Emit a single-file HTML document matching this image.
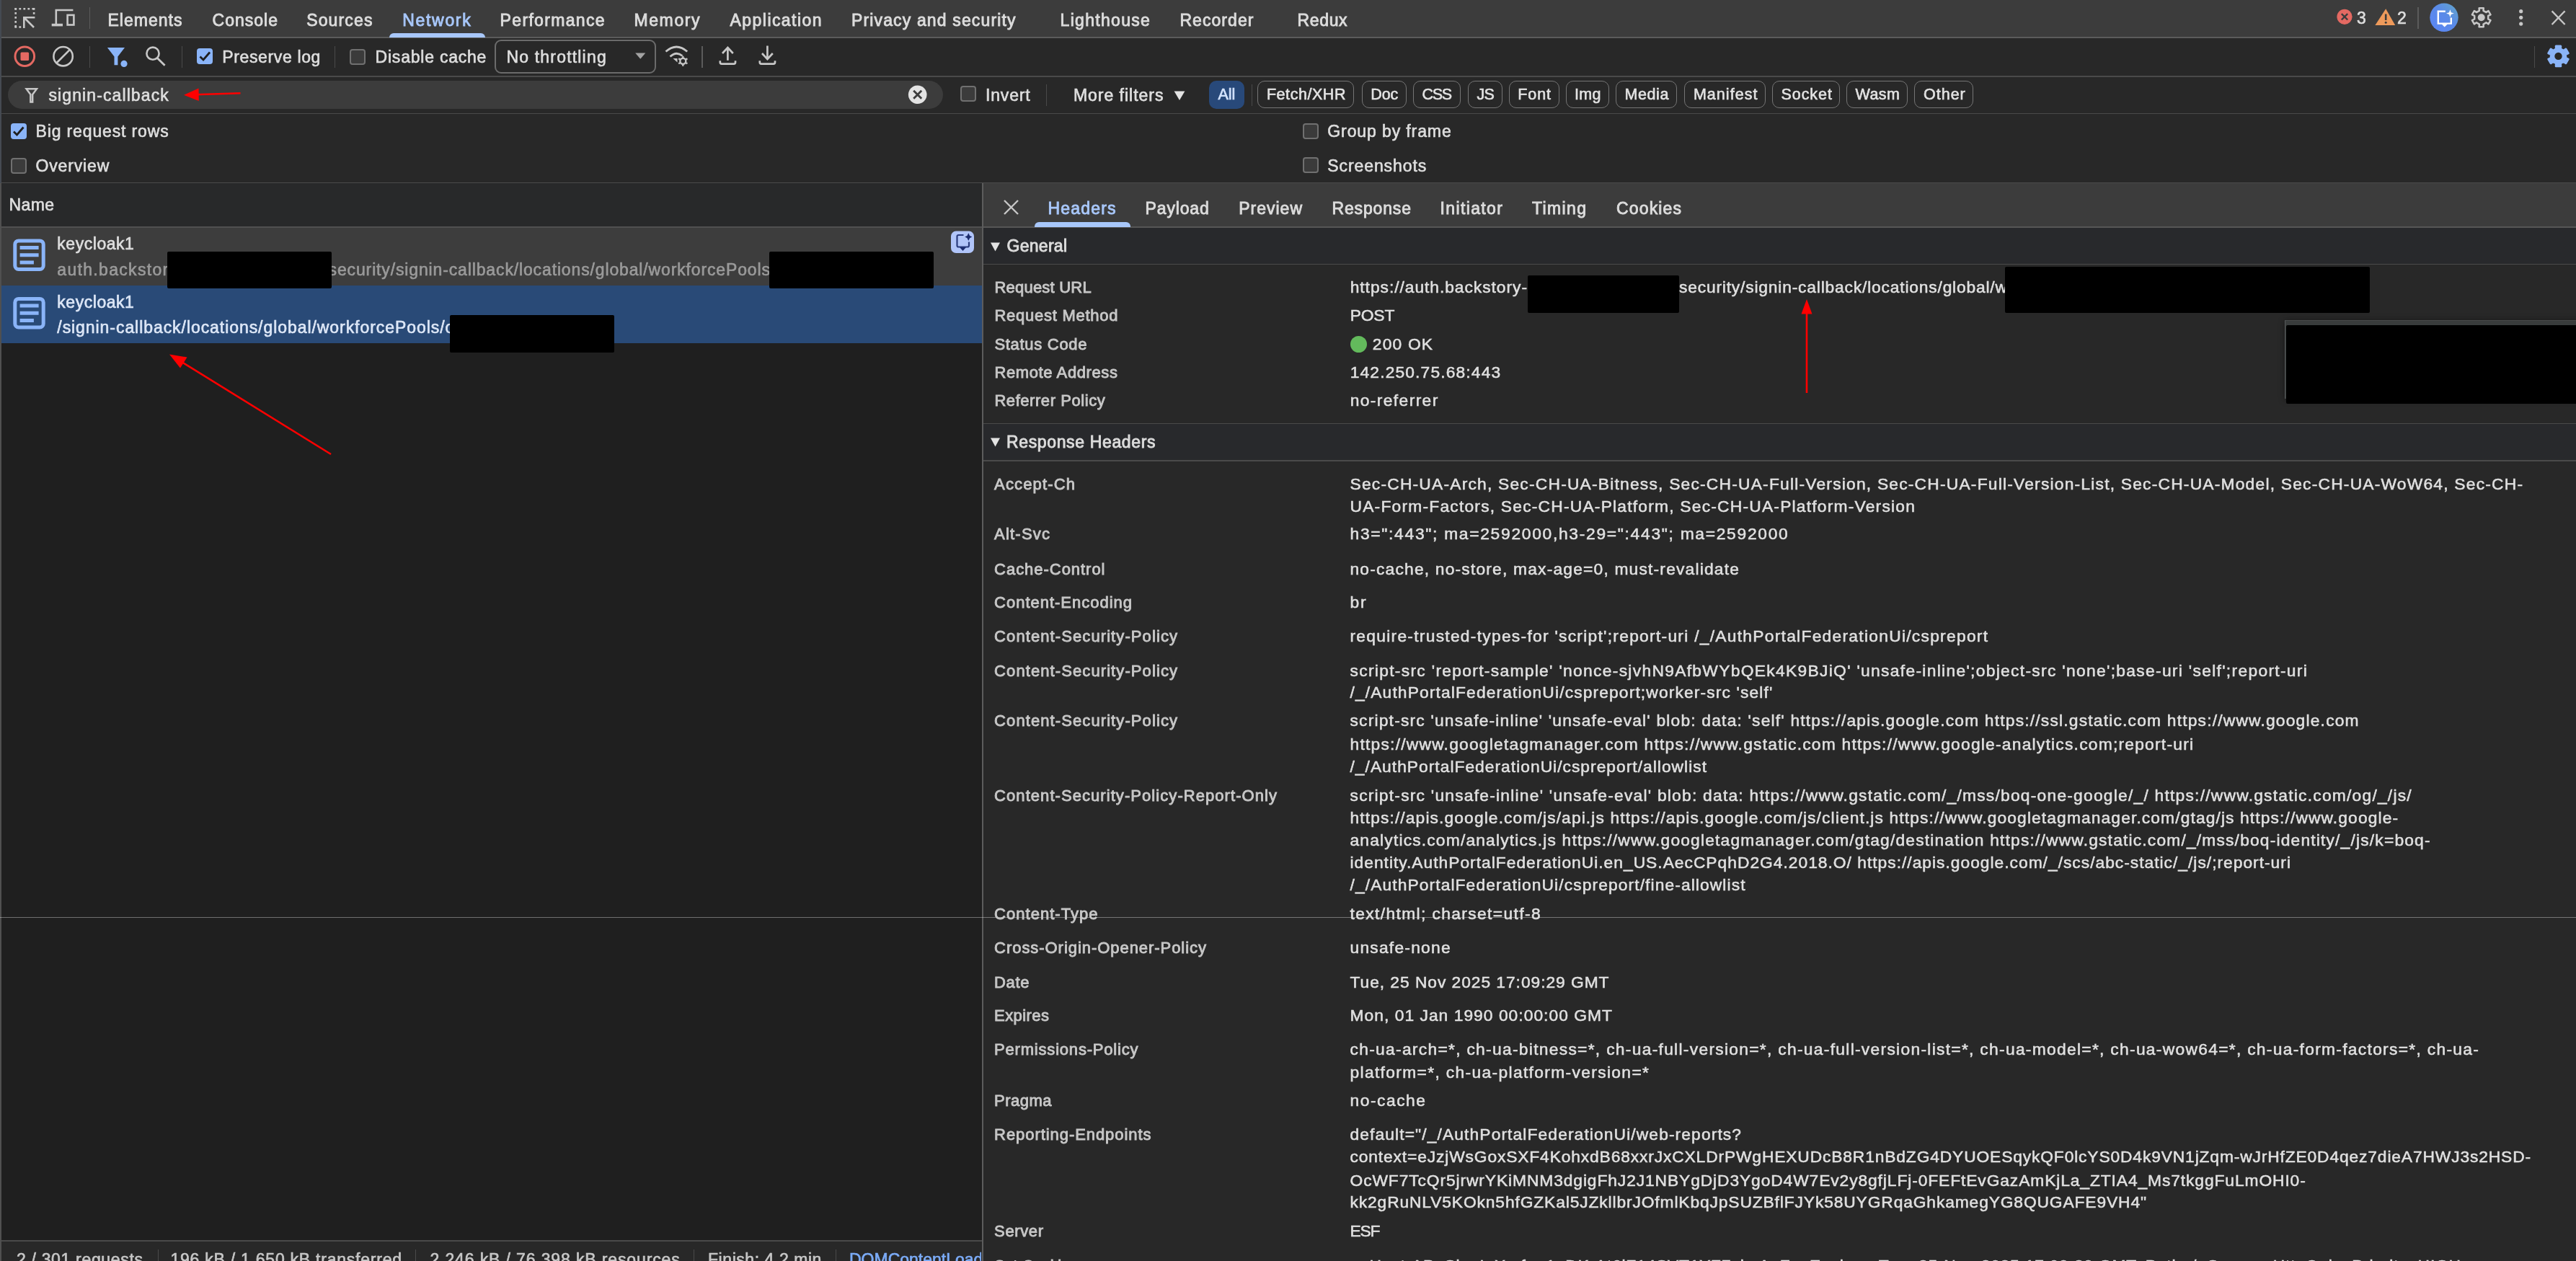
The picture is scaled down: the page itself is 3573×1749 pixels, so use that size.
<!DOCTYPE html>
<html lang="en"><head><meta charset="utf-8"><title>DevTools - Network</title>
<style>
html,body{margin:0;padding:0;background:#282828;}
body{width:3573px;height:1749px;overflow:hidden;font-family:"Liberation Sans",Arial,sans-serif;color:#e3e3e3;}
#root{position:relative;width:3573px;height:1749px;overflow:hidden;background:#282828;}
.b{position:absolute;}
.t{position:absolute;white-space:nowrap;line-height:30px;margin-top:-15px;font-size:23px;color:#e3e3e3;}
.tab{color:#dcdcdc;-webkit-text-stroke:0.9px #dcdcdc;}
.tab.sel{color:#a8c7fa;-webkit-text-stroke:0.9px #a8c7fa;}
.ui{color:#dedede;-webkit-text-stroke:0.65px;}
.mf{-webkit-text-stroke:0.75px;}
.selrow{color:#dde7f7;}
.dim{color:#9a9a9a;}
.st{color:#c7c7c7;}
.link{color:#7cacf8;width:183px;overflow:hidden;}
.pilltxt{color:#e3e3e3;font-size:21.5px;-webkit-text-stroke:0.6px #e3e3e3;}
.allsel{color:#d3e3fd;-webkit-text-stroke:0.7px #d3e3fd;}
.lab{color:#c7c7c7;font-size:22px;-webkit-text-stroke:0.9px #c7c7c7;}
.val{margin-top:-15.6px;color:#e0e0e0;font-size:22.8px;-webkit-text-stroke:0.55px;}
.hl{position:absolute;left:0;height:1px;background:#4a4a4a;}
.vl{position:absolute;width:1px;background:#4a4a4a;}
.pill{position:absolute;top:112px;height:36px;border:1.5px solid #757575;border-radius:10px;box-sizing:content-box;}
.cb{position:absolute;width:18px;height:18px;border:2px solid #707070;border-radius:4px;background:#3b3b3b;}
.cbc{position:absolute;width:22px;height:22px;border-radius:4px;background:#8ab4f8;}
svg{position:absolute;overflow:visible;}
.blk{position:absolute;background:#000;border-radius:2px;z-index:3;}
#texts{position:absolute;left:0;top:0;width:3573px;height:1749px;will-change:transform;}
</style></head>
<body>
<div id="root">
<!-- backgrounds -->
<div class="b" style="left:0;top:0;width:3573px;height:52px;background:#3c3c3c"></div>
<div class="hl" style="top:51px;width:3573px;height:2px;background:#5b5b5b"></div>
<div class="hl" style="top:104.5px;width:3573px;height:2px"></div>
<div class="hl" style="top:156.5px;width:3573px;height:1.5px"></div>
<div class="hl" style="top:252.5px;width:3573px;height:1.5px"></div>
<!-- filter input pill -->
<div class="b" style="left:11px;top:112px;width:1297px;height:39px;border-radius:20px;background:#3c3c3c"></div>
<!-- left panel -->
<div class="b" style="left:0;top:254px;width:1362px;height:60px;background:#28292a"></div>
<div class="b" style="left:0;top:315px;width:1362px;height:1406px;background:#1f1f1f"></div>
<div class="b" style="left:0;top:315px;width:1362px;height:80.5px;background:#3d3d3d"></div>
<div class="b" style="left:0;top:395.5px;width:1362px;height:80px;background:#294a77"></div>
<div class="hl" style="top:313.6px;width:1362px;height:2px;background:#505050"></div>
<div class="b" style="left:0;top:1721px;width:1362px;height:28px;background:#282828"></div>
<div class="hl" style="top:1720px;width:1362px;height:1.5px"></div>
<div class="vl" style="left:219px;top:1733px;height:16px"></div>
<div class="vl" style="left:576px;top:1733px;height:16px"></div>
<div class="vl" style="left:962px;top:1733px;height:16px"></div>
<div class="vl" style="left:1159px;top:1733px;height:16px"></div>
<!-- window left edge -->
<div class="b" style="left:0;top:0;width:1.5px;height:254px;background:#454a52"></div>
<div class="b" style="left:0;top:254px;width:1.5px;height:1495px;background:#505050"></div>
<!-- right panel -->
<div class="b" style="left:1362px;top:254px;width:2211px;height:1495px;background:#282828"></div>
<div class="b" style="left:1362px;top:254px;width:2211px;height:60px;background:#3c3c3c"></div>
<div class="hl" style="left:1362px;top:314px;width:2211px;height:2.5px;background:#565656"></div>
<div class="b" style="left:1362px;top:315.5px;width:2211px;height:50px;background:#28292c"></div>
<div class="hl" style="left:1362px;top:365.5px;width:2211px;height:1.5px"></div>
<div class="hl" style="left:1362px;top:586.5px;width:2211px;height:1.5px"></div>
<div class="b" style="left:1362px;top:588px;width:2211px;height:50px;background:#28292c"></div>
<div class="hl" style="left:1362px;top:638px;width:2211px;height:1.5px"></div>
<div class="vl" style="left:1362px;top:254px;height:1495px;width:1.5px;background:#5c5c5c"></div>
<!-- tab underlines -->
<div class="b" style="left:540px;top:45.5px;width:133px;height:6.5px;background:#a8c7fa;border-radius:6px 6px 0 0"></div>
<div class="b" style="left:1434.5px;top:308px;width:133.5px;height:6.5px;background:#a8c7fa;border-radius:6px 6px 0 0"></div>
<!-- toolbar separators -->
<div class="vl" style="left:123.5px;top:10px;height:30px;width:1.5px;background:#5b5b5b"></div>
<div class="vl" style="left:123.5px;top:63.5px;height:30px;width:1.5px"></div>
<div class="vl" style="left:251.5px;top:63.5px;height:30px;width:1.5px"></div>
<div class="vl" style="left:463.5px;top:63.5px;height:30px;width:1.5px"></div>
<div class="vl" style="left:972.5px;top:63.5px;height:30px;width:2px;background:#5b5b5b"></div>
<div class="vl" style="left:3514.5px;top:63.5px;height:30px;width:1.5px"></div>
<div class="vl" style="left:3353px;top:10px;height:30px;width:1.5px;background:#5b5b5b"></div>
<div class="vl" style="left:1450.5px;top:117px;height:30px;width:1.5px"></div>
<div class="vl" style="left:1735.5px;top:117px;height:30px;width:1.5px"></div>
<!-- select -->
<div class="b" style="left:686px;top:54.5px;width:220px;height:43.5px;border:2px solid #6b6b6b;border-radius:9px"></div>
<!-- checkboxes -->
<div class="cbc" style="left:273px;top:67px"></div>
<div class="cb" style="left:485px;top:67.5px"></div>
<div class="cbc" style="left:14.5px;top:171px"></div>
<div class="cb" style="left:15px;top:218.5px"></div>
<div class="cb" style="left:1331.5px;top:119px"></div>
<div class="cb" style="left:1807px;top:171px"></div>
<div class="cb" style="left:1807px;top:218px"></div>
<!-- filter pills -->
<div class="b" style="left:1677px;top:112px;width:49px;height:38.5px;border-radius:10px;background:#28497a"></div>
<div class="pill" style="left:1744.4px;width:131.6px"></div>
<div class="pill" style="left:1888.8px;width:59.9px"></div>
<div class="pill" style="left:1960.0px;width:63.6px"></div>
<div class="pill" style="left:2036.0px;width:46.3px"></div>
<div class="pill" style="left:2092.8px;width:67.8px"></div>
<div class="pill" style="left:2171.5px;width:58.5px"></div>
<div class="pill" style="left:2240.9px;width:83.1px"></div>
<div class="pill" style="left:2336.4px;width:110.6px"></div>
<div class="pill" style="left:2458.0px;width:92.4px"></div>
<div class="pill" style="left:2560.9px;width:83.6px"></div>
<div class="pill" style="left:2655.4px;width:79.9px"></div>
<!-- redaction boxes -->
<div class="blk" style="left:232px;top:348.5px;width:228px;height:51.5px"></div>
<div class="blk" style="left:1067px;top:348.5px;width:228px;height:51.5px"></div>
<div class="blk" style="left:624px;top:437px;width:228px;height:51.5px"></div>
<div class="blk" style="left:2118.5px;top:382px;width:210px;height:52px"></div>
<div class="blk" style="left:2780.5px;top:369.5px;width:506.5px;height:64px"></div>
<div class="b" style="left:3169px;top:443.5px;width:410px;height:109.5px;background:#393c3c;border-top:1.5px solid #484b4b;border-left:1.5px solid #555858;box-sizing:border-box;box-shadow:0 1px 9px rgba(0,0,0,0.45);z-index:3"></div>
<div class="blk" style="left:3171px;top:450.5px;width:402px;height:109px;border-radius:2px 0 0 2px"></div>
<!-- status dot -->
<div class="b" style="left:1872.5px;top:466.2px;width:23px;height:23px;border-radius:50%;background:#63ba5c"></div>
<!-- icons -->
<svg width="3573" height="1749" viewBox="0 0 3573 1749" style="left:0;top:0" fill="none" stroke-linecap="butt">
<!-- inspect -->
<g stroke="#c7c7c7" stroke-width="2.6">
<path d="M20.4 12.2H48.4" stroke-dasharray="2.8 3.2"/>
<path d="M21.7 10.9V38.9" stroke-dasharray="2.8 3.2"/>
<path d="M47.1 10.9V21" stroke-dasharray="2.8 3.2"/>
<path d="M20.4 37.5H31" stroke-dasharray="2.8 3.2"/>
<path d="M33.3 38.9V24.2H48.4M34 25L47 38"/>
</g>
<!-- device -->
<g stroke="#c7c7c7" stroke-width="2.6">
<path d="M77.8 33V14H101.4"/>
<path d="M71.7 34.6H87" stroke-width="3.6"/>
<rect x="93.6" y="20.9" width="8.8" height="13.6"/>
</g>
<!-- record -->
<circle cx="34.3" cy="78.2" r="13.3" stroke="#e46962" stroke-width="3"/>
<rect x="28.5" y="72.4" width="11.6" height="11.6" rx="1.5" fill="#e46962"/>
<!-- clear -->
<circle cx="87.6" cy="78.2" r="13.2" stroke="#c7c7c7" stroke-width="2.6"/>
<path d="M78.3 87.5L96.9 68.9" stroke="#c7c7c7" stroke-width="2.6"/>
<!-- funnel filled -->
<path d="M148.9 66H173L163.4 78.5V90.3H158.5V78.5Z" fill="#8ab4f8"/>
<circle cx="172" cy="88.4" r="4.6" fill="#8ab4f8"/>
<!-- search -->
<circle cx="212" cy="74.2" r="8.6" stroke="#c7c7c7" stroke-width="2.6"/>
<path d="M218.2 80.5L228.6 90.8" stroke="#c7c7c7" stroke-width="2.8"/>
<!-- check marks -->
<g stroke="#1f1f1f" stroke-width="2.8" stroke-linejoin="miter">
<path d="M277.5 78.5L282 83L291 72.5"/>
<path d="M19 182.5L23.5 187L32.5 176.5"/>
</g>
<!-- select caret -->
<path d="M881.2 73.4H895.3L888.25 81.8Z" fill="#a3a3a3"/>
<!-- wifi gear -->
<g stroke="#c7c7c7" stroke-width="2.8">
<path d="M923.5 71.5Q938.3 58.5 953.2 71.5"/>
<path d="M929.5 78.5Q938 70.5 946.5 77.5"/>
</g>
<path d="M933.5 81L939.5 81L939.5 86.5Z" fill="#c7c7c7"/>
<circle cx="947.3" cy="84.8" r="4" stroke="#c7c7c7" stroke-width="2.4"/>
<g stroke="#c7c7c7" stroke-width="2.4"><path d="M947.3 77.8V80M947.3 89.6V91.8M941.2 81.3L943.2 82.4M951.4 87.2L953.4 88.3M941.2 88.3L943.2 87.2M951.4 82.4L953.4 81.3"/></g>
<!-- upload -->
<g stroke="#c7c7c7" stroke-width="2.7">
<path d="M1009.4 83.8V65.5M1002 74L1009.4 66L1016.8 74"/>
<path d="M998.8 84.3V86.5Q998.8 88.6 1001 88.6H1017.8Q1020 88.6 1020 86.5V84.3"/>
<!-- download -->
<path d="M1064.4 63.6V81.5M1057 74L1064.4 82L1071.8 74"/>
<path d="M1053.8 84.3V86.5Q1053.8 88.6 1056 88.6H1072.8Q1075 88.6 1075 86.5V84.3"/>
</g>
<!-- funnel outline in filter -->
<path d="M36.5 123.2H51L45.2 131V141.5H42.3V131Z" stroke="#c7c7c7" stroke-width="2.4" stroke-linejoin="miter"/>
<!-- clear input -->
<circle cx="1272.7" cy="131.2" r="12.8" fill="#e3e3e3"/>
<path d="M1267.2 125.7L1278.2 136.7M1278.2 125.7L1267.2 136.7" stroke="#3c3c3c" stroke-width="2.8"/>
<!-- more filters triangle -->
<path d="M1628.6 126.5H1643.4L1636 139Z" fill="#e3e3e3"/>
<!-- doc icons -->
<g stroke="#8ab4f8" stroke-width="5">
<rect x="20.8" y="333.9" width="39.4" height="39.6" rx="5"/>
<path d="M27.6 343.4H53.6M27.6 353.8H53.6M27.6 363.9H46.9"/>
<rect x="20.8" y="414.4" width="39.4" height="39.6" rx="5"/>
<path d="M27.6 423.9H53.6M27.6 434.3H53.6M27.6 444.4H46.9"/>
</g>
<!-- AI icon in row -->
<rect x="1319" y="320.6" width="32" height="30.5" rx="7" fill="#b1c5f9"/>
<g stroke="#2a3c7e" stroke-width="2.2" stroke-linejoin="round">
<path d="M1336.5 326H1329.5Q1327.5 326 1327.5 328V340.5Q1327.5 342.5 1329.5 342.5H1342Q1344 342.5 1344 340.5V335.5"/>
</g>
<path d="M1331 343H1340L1335.5 348Z" fill="#1b2b6e"/>
<path d="M1343.3 323.3L1345.1 326.9L1348.3 328.6L1345.1 330.3L1343.3 333.9L1341.5 330.3L1338.3 328.6L1341.5 326.9Z" fill="#1b2b6e"/>
<!-- close X right tabs -->
<path d="M1393 278L1412 297M1412 278L1393 297" stroke="#c7c7c7" stroke-width="2.4"/>
<!-- section triangles -->
<path d="M1374 336.5H1387L1380.5 348.5Z" fill="#e3e3e3"/>
<path d="M1374 607.5H1387L1380.5 619.5Z" fill="#e3e3e3"/>
<!-- top right icons -->
<circle cx="3252" cy="23.3" r="10.6" fill="#e46962"/>
<path d="M3247.8 19.1L3256.2 27.5M3256.2 19.1L3247.8 27.5" stroke="#3c3c3c" stroke-width="2.4"/>
<path d="M3309.2 12.2L3322.2 34.9H3294.4Z" fill="#ee9a5b"/>
<path d="M3309.2 19.5V28" stroke="#3c3c3c" stroke-width="2.6"/><circle cx="3309.2" cy="31.3" r="1.5" fill="#3c3c3c"/>
<defs><linearGradient id="aig" x1="0" y1="1" x2="1" y2="0"><stop offset="0" stop-color="#5b86f7"/><stop offset="0.55" stop-color="#5a8ae8"/><stop offset="1" stop-color="#63a8c8"/></linearGradient></defs>
<circle cx="3390" cy="24.2" r="19.7" fill="url(#aig)"/>
<path d="M3391.8 15.7H3381.8V32.6H3399.8V24.6" stroke="#fff" stroke-width="2.4"/>
<path d="M3386.5 33.2H3395L3390.7 37.6Z" fill="#fff"/>
<path d="M3398.4 13.2L3399.8 17.2L3403.8 18.6L3399.8 20L3398.4 24L3397 20L3393 18.6L3397 17.2Z" fill="#fff"/>
<path d="M3438.9 14.8L3438.6 11.2L3444.8 11.2L3444.5 14.8L3448.4 17.1L3451.5 15.0L3454.5 20.3L3451.2 21.9L3451.2 26.5L3454.5 28.1L3451.5 33.4L3448.4 31.3L3444.5 33.6L3444.8 37.2L3438.6 37.2L3438.9 33.6L3435.0 31.3L3431.9 33.4L3428.9 28.1L3432.2 26.5L3432.2 21.9L3428.9 20.3L3431.9 15.0L3435.0 17.1Z" stroke="#c7c7c7" stroke-width="2.5" stroke-linejoin="round"/>
<circle cx="3441.7" cy="24.2" r="5" fill="#c7c7c7"/>
<circle cx="3496.7" cy="15.7" r="2.6" fill="#c7c7c7"/><circle cx="3496.7" cy="24.3" r="2.6" fill="#c7c7c7"/><circle cx="3496.7" cy="33.1" r="2.6" fill="#c7c7c7"/>
<path d="M3539.6 15.3L3557.6 34M3557.6 15.3L3539.6 34" stroke="#c7c7c7" stroke-width="2.4"/>
<path d="M3545.5 67.8L3545.2 64.0L3551.8 64.0L3551.5 67.8L3555.7 70.3L3558.9 68.1L3562.2 73.8L3558.7 75.4L3558.7 80.4L3562.2 82.0L3558.9 87.7L3555.7 85.5L3551.5 88.0L3551.8 91.8L3545.2 91.8L3545.5 88.0L3541.3 85.5L3538.1 87.7L3534.8 82.0L3538.3 80.4L3538.3 75.4L3534.8 73.8L3538.1 68.1L3541.3 70.3Z" fill="#8ab4f8" stroke="#8ab4f8" stroke-width="3" stroke-linejoin="round"/>
<circle cx="3548.5" cy="77.9" r="5.2" fill="#282828"/>
<!-- red arrows -->
<g stroke="#ff0000" stroke-width="2.6" fill="#ff0000">
<path d="M333.5 129.3L270 131.2"/><path d="M255 131.8L275.5 122.5L275.8 140Z" stroke="none"/>
<path d="M459 630L248 499.5"/><path d="M235 491.5L259.5 495.5L250 510.5Z" stroke="none"/>
<path d="M2506 545V432"/><path d="M2506 415L2513.5 435.5H2498.5Z" stroke="none"/>
</g>
</svg>
<!-- stitch line -->
<div class="hl" style="top:1272px;width:3573px;height:1px;background:rgba(255,255,255,0.36)"></div>

<div id="texts">
<span class="t tab" style="left:149.5px;top:27.6px;letter-spacing:1.018px;">Elements</span>
<span class="t tab" style="left:294.5px;top:27.6px;letter-spacing:1.018px;">Console</span>
<span class="t tab" style="left:425.2px;top:27.6px;letter-spacing:1.137px;">Sources</span>
<span class="t tab" style="left:693.6px;top:27.6px;letter-spacing:1.333px;">Performance</span>
<span class="t tab" style="left:879.4px;top:27.6px;letter-spacing:1.628px;">Memory</span>
<span class="t tab" style="left:1012.6px;top:27.6px;letter-spacing:1.437px;">Application</span>
<span class="t tab" style="left:1181.0px;top:27.6px;letter-spacing:1.141px;">Privacy and security</span>
<span class="t tab" style="left:1470.6px;top:27.6px;letter-spacing:1.306px;">Lighthouse</span>
<span class="t tab" style="left:1636.4px;top:27.6px;letter-spacing:1.070px;">Recorder</span>
<span class="t tab" style="left:1799.5px;top:27.6px;letter-spacing:0.654px;">Redux</span>
<span class="t tab sel" style="left:558.3px;top:27.6px;letter-spacing:1.673px;">Network</span>
<span class="t ui" style="left:3269.0px;top:24.5px;letter-spacing:0.203px;">3</span>
<span class="t ui" style="left:3325.0px;top:24.5px;letter-spacing:-0.797px;">2</span>
<span class="t ui" style="left:308.2px;top:78.5px;letter-spacing:0.643px;">Preserve log</span>
<span class="t ui" style="left:520.6px;top:78.5px;letter-spacing:0.778px;">Disable cache</span>
<span class="t ui" style="left:702.4px;top:78.5px;letter-spacing:1.190px;">No throttling</span>
<span class="t ui" style="left:67.5px;top:132.0px;letter-spacing:1.099px;">signin-callback</span>
<span class="t ui" style="left:1367.0px;top:132.0px;letter-spacing:0.834px;">Invert</span>
<span class="t ui mf" style="left:1488.9px;top:132.0px;letter-spacing:0.986px;">More filters</span>
<span class="t pilltxt allsel" style="left:1689.4px;top:131.3px;letter-spacing:-0.003px;">All</span>
<span class="t pilltxt" style="left:1756.9px;top:131.3px;letter-spacing:0.557px;">Fetch/XHR</span>
<span class="t pilltxt" style="left:1901.3px;top:131.3px;letter-spacing:-0.167px;">Doc</span>
<span class="t pilltxt" style="left:1972.5px;top:131.3px;letter-spacing:-1.309px;">CSS</span>
<span class="t pilltxt" style="left:2048.5px;top:131.3px;letter-spacing:-0.794px;">JS</span>
<span class="t pilltxt" style="left:2105.3px;top:131.3px;letter-spacing:0.923px;">Font</span>
<span class="t pilltxt" style="left:2184.0px;top:131.3px;letter-spacing:0.328px;">Img</span>
<span class="t pilltxt" style="left:2253.4px;top:131.3px;letter-spacing:0.634px;">Media</span>
<span class="t pilltxt" style="left:2348.9px;top:131.3px;letter-spacing:1.048px;">Manifest</span>
<span class="t pilltxt" style="left:2470.5px;top:131.3px;letter-spacing:0.933px;">Socket</span>
<span class="t pilltxt" style="left:2573.4px;top:131.3px;letter-spacing:0.492px;">Wasm</span>
<span class="t pilltxt" style="left:2667.9px;top:131.3px;letter-spacing:1.030px;">Other</span>
<span class="t ui" style="left:49.5px;top:182.0px;letter-spacing:0.863px;">Big request rows</span>
<span class="t ui" style="left:49.5px;top:229.7px;letter-spacing:0.842px;">Overview</span>
<span class="t ui" style="left:1841.3px;top:182.0px;letter-spacing:0.893px;">Group by frame</span>
<span class="t ui" style="left:1841.3px;top:229.7px;letter-spacing:0.904px;">Screenshots</span>
<span class="t ui" style="left:12.5px;top:284.0px;letter-spacing:0.380px;">Name</span>
<span class="t ui" style="left:79.3px;top:338.4px;letter-spacing:0.540px;">keycloak1</span>
<span class="t ui dim" style="left:79.3px;top:373.7px;letter-spacing:1.318px;">auth.backstory-</span>
<span class="t ui dim" style="left:455.6px;top:373.7px;letter-spacing:0.861px;">security/signin-callback/locations/global/workforcePools</span>
<span class="t ui selrow" style="left:79.3px;top:418.8px;letter-spacing:0.540px;">keycloak1</span>
<span class="t ui selrow" style="left:79.3px;top:454.1px;letter-spacing:0.939px;">/signin-callback/locations/global/workforcePools/c</span>
<span class="t ui st" style="left:23.0px;top:1747.0px;letter-spacing:0.670px;">2 / 301 requests</span>
<span class="t ui st" style="left:236.4px;top:1747.0px;letter-spacing:0.765px;">196 kB / 1,650 kB transferred</span>
<span class="t ui st" style="left:596.5px;top:1747.0px;letter-spacing:0.872px;">2,246 kB / 76,398 kB resources</span>
<span class="t ui st" style="left:982.0px;top:1747.0px;letter-spacing:0.560px;">Finish: 4.2 min</span>
<span class="t ui st link" style="left:1178.0px;top:1747.0px;">DOMContentLoaded: 1.2 min</span>
<span class="t tab" style="left:1588.6px;top:288.6px;letter-spacing:0.846px;">Payload</span>
<span class="t tab" style="left:1718.3px;top:288.6px;letter-spacing:0.981px;">Preview</span>
<span class="t tab" style="left:1847.5px;top:288.6px;letter-spacing:0.846px;">Response</span>
<span class="t tab" style="left:1997.5px;top:288.6px;letter-spacing:1.370px;">Initiator</span>
<span class="t tab" style="left:2124.9px;top:288.6px;letter-spacing:1.386px;">Timing</span>
<span class="t tab" style="left:2242.0px;top:288.6px;letter-spacing:1.148px;">Cookies</span>
<span class="t tab sel" style="left:1453.5px;top:288.6px;letter-spacing:1.194px;">Headers</span>
<span class="t tab" style="left:1396.5px;top:341.0px;letter-spacing:0.279px;">General</span>
<span class="t tab" style="left:1396.0px;top:612.5px;letter-spacing:0.640px;">Response Headers</span>
<span class="t lab" style="left:1379.4px;top:399.0px;letter-spacing:0.227px;">Request URL</span>
<span class="t lab" style="left:1379.4px;top:437.8px;letter-spacing:0.743px;">Request Method</span>
<span class="t lab" style="left:1379.4px;top:477.7px;letter-spacing:0.702px;">Status Code</span>
<span class="t lab" style="left:1379.4px;top:516.5px;letter-spacing:0.612px;">Remote Address</span>
<span class="t lab" style="left:1379.4px;top:556.0px;letter-spacing:0.558px;">Referrer Policy</span>
<span class="t val" style="left:1872.7px;top:399.0px;letter-spacing:0.955px;">https://auth.backstory-</span>
<span class="t val" style="left:2329.0px;top:399.0px;letter-spacing:0.817px;">security/signin-callback/locations/global/w</span>
<span class="t val" style="left:1872.7px;top:437.8px;letter-spacing:-0.126px;">POST</span>
<span class="t val" style="left:1903.8px;top:477.7px;letter-spacing:1.178px;">200 OK</span>
<span class="t val" style="left:1872.7px;top:516.5px;letter-spacing:1.146px;">142.250.75.68:443</span>
<span class="t val" style="left:1872.7px;top:556.0px;letter-spacing:1.391px;">no-referrer</span>
<span class="t lab" style="left:1379.1px;top:672.0px;letter-spacing:1.148px;">Accept-Ch</span>
<span class="t val" style="left:1872.5px;top:672.0px;letter-spacing:1.211px;">Sec-CH-UA-Arch, Sec-CH-UA-Bitness, Sec-CH-UA-Full-Version, Sec-CH-UA-Full-Version-List, Sec-CH-UA-Model, Sec-CH-UA-WoW64, Sec-CH-</span>
<span class="t val" style="left:1872.5px;top:702.5px;letter-spacing:1.215px;">UA-Form-Factors, Sec-CH-UA-Platform, Sec-CH-UA-Platform-Version</span>
<span class="t lab" style="left:1379.1px;top:741.0px;letter-spacing:1.202px;">Alt-Svc</span>
<span class="t val" style="left:1872.5px;top:741.0px;letter-spacing:1.704px;">h3=":443"; ma=2592000,h3-29=":443"; ma=2592000</span>
<span class="t lab" style="left:1379.1px;top:790.0px;letter-spacing:0.963px;">Cache-Control</span>
<span class="t val" style="left:1872.5px;top:790.0px;letter-spacing:1.188px;">no-cache, no-store, max-age=0, must-revalidate</span>
<span class="t lab" style="left:1379.1px;top:836.0px;letter-spacing:0.985px;">Content-Encoding</span>
<span class="t val" style="left:1872.5px;top:836.0px;letter-spacing:1.819px;">br</span>
<span class="t lab" style="left:1379.1px;top:882.5px;letter-spacing:1.092px;">Content-Security-Policy</span>
<span class="t val" style="left:1872.5px;top:882.5px;letter-spacing:1.271px;">require-trusted-types-for 'script';report-uri /_/AuthPortalFederationUi/cspreport</span>
<span class="t lab" style="left:1379.1px;top:931.0px;letter-spacing:1.092px;">Content-Security-Policy</span>
<span class="t val" style="left:1872.5px;top:931.0px;letter-spacing:1.313px;">script-src 'report-sample' 'nonce-sjvhN9AfbWYbQEk4K9BJiQ' 'unsafe-inline';object-src 'none';base-uri 'self';report-uri</span>
<span class="t val" style="left:1872.5px;top:961.0px;letter-spacing:1.134px;">/_/AuthPortalFederationUi/cspreport;worker-src 'self'</span>
<span class="t lab" style="left:1379.1px;top:1000.0px;letter-spacing:1.092px;">Content-Security-Policy</span>
<span class="t val" style="left:1872.5px;top:1000.0px;letter-spacing:1.194px;">script-src 'unsafe-inline' 'unsafe-eval' blob: data: 'self' https://apis.google.com https://ssl.gstatic.com https://www.google.com</span>
<span class="t val" style="left:1872.5px;top:1032.5px;letter-spacing:1.229px;">https://www.googletagmanager.com https://www.gstatic.com https://www.google-analytics.com;report-uri</span>
<span class="t val" style="left:1872.5px;top:1064.0px;letter-spacing:1.015px;">/_/AuthPortalFederationUi/cspreport/allowlist</span>
<span class="t lab" style="left:1379.1px;top:1103.5px;letter-spacing:1.062px;">Content-Security-Policy-Report-Only</span>
<span class="t val" style="left:1872.5px;top:1103.5px;letter-spacing:1.230px;">script-src 'unsafe-inline' 'unsafe-eval' blob: data: https://www.gstatic.com/_/mss/boq-one-google/_/ https://www.gstatic.com/og/_/js/</span>
<span class="t val" style="left:1872.5px;top:1135.0px;letter-spacing:1.112px;">https://apis.google.com/js/api.js https://apis.google.com/js/client.js https://www.googletagmanager.com/gtag/js https://www.google-</span>
<span class="t val" style="left:1872.5px;top:1166.0px;letter-spacing:1.177px;">analytics.com/analytics.js https://www.googletagmanager.com/gtag/destination https://www.gstatic.com/_/mss/boq-identity/_/js/k=boq-</span>
<span class="t val" style="left:1872.5px;top:1196.5px;letter-spacing:0.998px;">identity.AuthPortalFederationUi.en_US.AecCPqhD2G4.2018.O/ https://apis.google.com/_/scs/abc-static/_/js/;report-uri</span>
<span class="t val" style="left:1872.5px;top:1228.0px;letter-spacing:1.099px;">/_/AuthPortalFederationUi/cspreport/fine-allowlist</span>
<span class="t lab" style="left:1379.1px;top:1268.0px;letter-spacing:1.029px;">Content-Type</span>
<span class="t val" style="left:1872.5px;top:1268.0px;letter-spacing:1.374px;">text/html; charset=utf-8</span>
<span class="t lab" style="left:1379.1px;top:1314.5px;letter-spacing:0.949px;">Cross-Origin-Opener-Policy</span>
<span class="t val" style="left:1872.5px;top:1314.5px;letter-spacing:1.233px;">unsafe-none</span>
<span class="t lab" style="left:1379.1px;top:1362.5px;letter-spacing:0.639px;">Date</span>
<span class="t val" style="left:1872.5px;top:1362.5px;letter-spacing:0.949px;">Tue, 25 Nov 2025 17:09:29 GMT</span>
<span class="t lab" style="left:1379.1px;top:1409.0px;letter-spacing:0.423px;">Expires</span>
<span class="t val" style="left:1872.5px;top:1409.0px;letter-spacing:1.033px;">Mon, 01 Jan 1990 00:00:00 GMT</span>
<span class="t lab" style="left:1379.1px;top:1455.5px;letter-spacing:0.798px;">Permissions-Policy</span>
<span class="t val" style="left:1872.5px;top:1455.5px;letter-spacing:1.294px;">ch-ua-arch=*, ch-ua-bitness=*, ch-ua-full-version=*, ch-ua-full-version-list=*, ch-ua-model=*, ch-ua-wow64=*, ch-ua-form-factors=*, ch-ua-</span>
<span class="t val" style="left:1872.5px;top:1487.5px;letter-spacing:1.342px;">platform=*, ch-ua-platform-version=*</span>
<span class="t lab" style="left:1379.1px;top:1527.0px;letter-spacing:0.471px;">Pragma</span>
<span class="t val" style="left:1872.5px;top:1527.0px;letter-spacing:1.531px;">no-cache</span>
<span class="t lab" style="left:1379.1px;top:1573.5px;letter-spacing:0.935px;">Reporting-Endpoints</span>
<span class="t val" style="left:1872.5px;top:1573.5px;letter-spacing:1.108px;">default="/_/AuthPortalFederationUi/web-reports?</span>
<span class="t val" style="left:1872.5px;top:1605.0px;letter-spacing:0.860px;">context=eJzjWsGoxSXF4KohxdB68xxrJxCXLDrPWgHEXUDcB8R1nBdZG4DYUOESqykQF0lcYS0D4k9VN1jZqm-wJrHfZE0D4qez7dieA7HWJ3s2HSD-</span>
<span class="t val" style="left:1872.5px;top:1637.5px;letter-spacing:0.899px;">OcWF7TcQr5jrwrYKiMNM3dgigFhJ2J1NBYgDjD3YgoD4W7Ev2y8gfjLFj-0FEFtEvGazAmKjLa_ZTIA4_Ms7tkggFuLmOHI0-</span>
<span class="t val" style="left:1872.5px;top:1668.0px;letter-spacing:0.873px;">kk2gRuNLV5KOkn5hfGZKal5JZkllbrJOfmlKbqJpSUZBflFJYk58UYGRqaGhkamegYG8QUGAFE9VH4"</span>
<span class="t lab" style="left:1379.1px;top:1707.8px;letter-spacing:0.621px;">Server</span>
<span class="t val" style="left:1872.5px;top:1707.8px;letter-spacing:-1.172px;">ESF</span>
<span class="t lab" style="left:1379.1px;top:1755.5px;letter-spacing:-0.438px;">Set-Cookie</span>
<span class="t val" style="left:1872.5px;top:1755.5px;letter-spacing:0.803px;">__Host-AP_SignInXsrf=g1nDKrAt6iF14SVT1YZ7skqAnFs; Expires=Tue, 25-Nov-2025 17:09:29 GMT; Path=/; Secure; HttpOnly; Priority=HIGH</span>
</div>
</div>
</body></html>
